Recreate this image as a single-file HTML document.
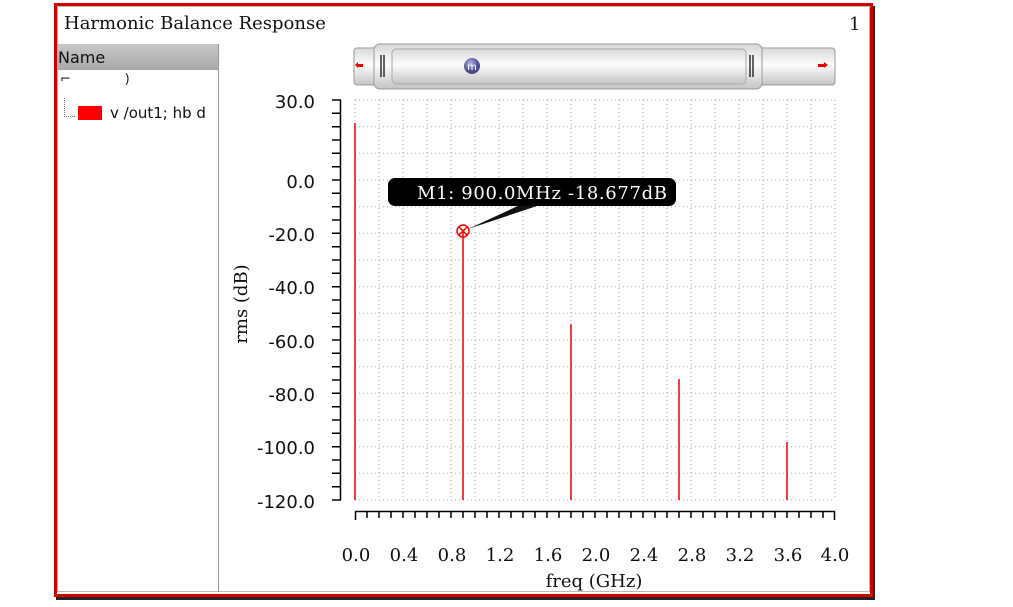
<!DOCTYPE html>
<html><head><meta charset="utf-8"><style>
body{margin:0;width:1013px;height:607px;background:#fff;overflow:hidden;position:relative;font-family:"DejaVu Sans","Liberation Sans",sans-serif}
.ab{position:absolute}
</style></head><body>
<div class="ab" style="left:54px;top:3px;width:819px;height:594px;border:3px solid #d00000;box-sizing:border-box;box-shadow:2px 3px 0 #222"></div>
<div class="ab" style="left:57px;top:6px;width:813px;height:586px;border:1px solid #bbb;box-sizing:border-box"></div>
<div class="ab" style="left:64px;top:13px;font-size:18px;font-family:'DejaVu Serif','Liberation Serif',serif;color:#111">Harmonic Balance Response</div>
<div class="ab" style="left:849px;top:14px;font-size:18px;font-family:'DejaVu Serif','Liberation Serif',serif;color:#111">1</div>
<div class="ab" style="left:58px;top:44px;width:160px;height:26px;background:linear-gradient(#c8c8c8,#a8a8a8);font-size:16px;line-height:28px;color:#111">Name</div>
<div class="ab" style="left:218px;top:44px;width:1px;height:548px;background:#999"></div>
<div class="ab" style="left:60px;top:72px;font-size:13px;color:#222">⌐&nbsp;&nbsp;&nbsp;&nbsp;&nbsp;&nbsp;&nbsp;&nbsp;&nbsp;&nbsp;&nbsp;&nbsp;&nbsp;)</div>
<div class="ab" style="left:64px;top:98px;width:10px;height:18px;border-left:1px dotted #777;border-bottom:1px dotted #777"></div>
<div class="ab" style="left:78px;top:106px;width:24px;height:14px;background:#f00"></div>
<div class="ab" style="left:110px;top:104px;font-size:15px;color:#111">v /out1; hb d</div>
<svg class="ab" style="left:0;top:0" width="1013" height="607">
<defs><linearGradient id="g" x1="0" y1="0" x2="0" y2="1"><stop offset="0" stop-color="#d8d8d8"/><stop offset=".45" stop-color="#fdfdfd"/><stop offset="1" stop-color="#c4c4c4"/></linearGradient>
<radialGradient id="m" cx=".4" cy=".35"><stop offset="0" stop-color="#b8b8e8"/><stop offset="1" stop-color="#4a4a8a"/></radialGradient></defs>
<rect x="354" y="48" width="481" height="37" rx="3" fill="url(#g)" stroke="#999"/>
<rect x="374" y="44" width="388" height="45" rx="6" fill="url(#g)" stroke="#999"/>
<rect x="392" y="49" width="354" height="35" rx="4" fill="url(#g)" stroke="#aaa"/>
<rect x="357" y="64" width="6" height="3" fill="#e00"/><path d="M358 62v6l-3-3z" fill="#e00"/>
<rect x="818" y="64" width="6" height="3" fill="#e00"/><path d="M824 62v6l4-3z" fill="#e00"/>
<path d="M381 55v22M384 55v22M750 55v22M753 55v22" stroke="#000" stroke-width="1.2"/>
<circle cx="472" cy="66" r="8" fill="url(#m)"/><text x="472" y="70" font-size="10" fill="#fff" text-anchor="middle" font-family="DejaVu Sans">m</text>
<g stroke="#aaa" stroke-dasharray="1,3" stroke-width="1">
<path d="M355 100H835M355 126.7H835M355 153.3H835M355 180H835M355 206.7H835M355 233.3H835M355 260H835M355 286.7H835M355 313.3H835M355 340H835M355 366.7H835M355 393.3H835M355 420H835M355 446.7H835M355 473.3H835M355 500H835"/>
<path d="M355 100V500M379 100V500M403 100V500M427 100V500M451 100V500M475 100V500M499 100V500M523 100V500M547 100V500M571 100V500M595 100V500M619 100V500M643 100V500M667 100V500M691 100V500M715 100V500M739 100V500M763 100V500M787 100V500M811 100V500M835 100V500"/>
</g>
<g stroke="#000" stroke-width="1.5" fill="none">
<path d="M340.5 100V500"/>
<path d="M332 100h9M332 113.3h9M332 126.7h9M332 140h9M332 153.3h9M332 166.7h9M332 180h9M332 193.3h9M332 206.7h9M332 220h9M332 233.3h9M332 246.7h9M332 260h9M332 273.3h9M332 286.7h9M332 300h9M332 313.3h9M332 326.7h9M332 340h9M332 353.3h9M332 366.7h9M332 380h9M332 393.3h9M332 406.7h9M332 420h9M332 433.3h9M332 446.7h9M332 460h9M332 473.3h9M332 486.7h9M332 500h9"/>
<path d="M355 511.5H835"/>
<path d="M355.5 511v9M367 511v7M379 511v7M391 511v7M403 511v7M415 511v7M427 511v7M439 511v7M451 511v7M463 511v7M475 511v7M487 511v7M499 511v7M511 511v7M523 511v7M535 511v7M547 511v7M559 511v7M571 511v7M583 511v7M595 511v7M607 511v7M619 511v7M631 511v7M643 511v7M655 511v7M667 511v7M679 511v7M691 511v7M703 511v7M715 511v7M727 511v7M739 511v7M751 511v7M763 511v7M775 511v7M787 511v7M799 511v7M811 511v7M823 511v7M834.5 511v9"/>
</g>
<g stroke="#e00" stroke-width="1.5">
<path d="M355 123V500M463 231V500M571 324V500M679 379V500M787 442V500"/>
</g>
<g font-family="DejaVu Sans,Liberation Sans,sans-serif" font-size="18" fill="#111" text-anchor="end">
<text x="315" y="108">30.0</text><text x="315" y="188">0.0</text><text x="315" y="241">-20.0</text><text x="315" y="294">-40.0</text><text x="315" y="348">-60.0</text><text x="315" y="401">-80.0</text><text x="315" y="454">-100.0</text><text x="315" y="508">-120.0</text>
</g>
<g font-family="DejaVu Serif,Liberation Serif,serif" font-size="18" fill="#111" text-anchor="middle">
<text x="356" y="561">0.0</text><text x="404" y="561">0.4</text><text x="452" y="561">0.8</text><text x="500" y="561">1.2</text><text x="548" y="561">1.6</text><text x="596" y="561">2.0</text><text x="644" y="561">2.4</text><text x="692" y="561">2.8</text><text x="740" y="561">3.2</text><text x="788" y="561">3.6</text><text x="835" y="561">4.0</text>
<text x="594" y="587">freq (GHz)</text>
<text transform="translate(247,304) rotate(-90)">rms (dB)</text>
</g>
<path d="M520 205L540 205L468 229Z" fill="#111"/>
<rect x="388" y="178" width="288" height="28" rx="7" fill="#000"/>
<text x="417" y="199" font-family="DejaVu Serif,Liberation Serif,serif" font-size="18" fill="#fff" textLength="250">M1: 900.0MHz -18.677dB</text>
<circle cx="463" cy="231" r="6" fill="none" stroke="#e00" stroke-width="1.5"/>
<path d="M459 227l8 8M467 227l-8 8" stroke="#e00" stroke-width="1.5"/>
</svg>
</body></html>
